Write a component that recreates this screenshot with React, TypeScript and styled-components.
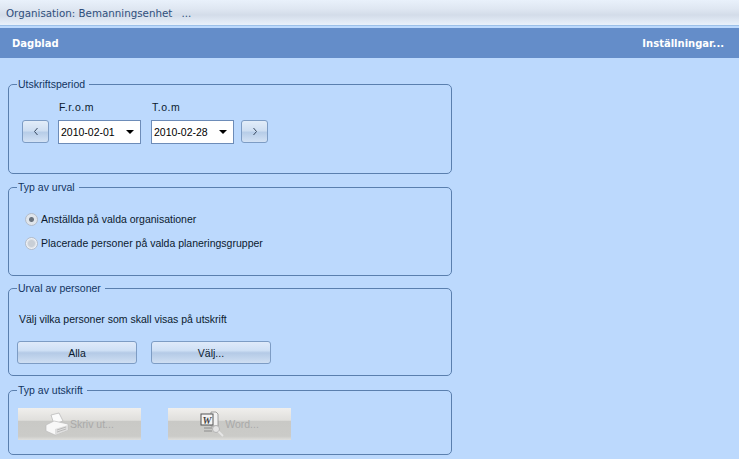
import React from "react";
import styled, { createGlobalStyle } from "styled-components";

const GlobalStyle = createGlobalStyle`
  html, body {
    margin: 0;
    padding: 0;
    height: 459px;
    overflow: hidden;
    background: #bcd9fd;
  }
  body {
    font-family: "Liberation Sans", Arial, sans-serif;
    font-size: 10.5px;
    color: #0b1a2e;
  }
`;

export default function App() {
  return (
    <Wrapper>
      <GlobalStyle />
      <TopBar>
        <span>Organisation: Bemanningsenhet</span>
        <span>...</span>
      </TopBar>
      <Header>
        <span>Dagblad</span>
        <span>Inställningar...</span>
      </Header>

      <Body>
        <Group $height={96} $gap={0}>
          <Legend>Utskriftsperiod</Legend>
          <PeriodRow>
            <NavButton aria-label="Föregående" $side="left">
              <Chevron viewBox="0 0 6 9">
                <path d="M4.5 1 L1.5 4.5 L4.5 8" />
              </Chevron>
            </NavButton>
            <DateField>
              <DateLabel>F.r.o.m</DateLabel>
              <DateBox>
                <span>2010-02-01</span>
                <Caret />
              </DateBox>
            </DateField>
            <DateField>
              <DateLabel>T.o.m</DateLabel>
              <DateBox>
                <span>2010-02-28</span>
                <Caret />
              </DateBox>
            </DateField>
            <NavButton aria-label="Nästa" $side="right">
              <Chevron viewBox="0 0 6 9">
                <path d="M1.5 1 L4.5 4.5 L1.5 8" />
              </Chevron>
            </NavButton>
          </PeriodRow>
        </Group>

        <Group $height={95} $gap={7}>
          <Legend>Typ av urval</Legend>
          <RadioList>
            <RadioRow>
              <Radio $checked />
              Anställda på valda organisationer
            </RadioRow>
            <RadioRow>
              <Radio />
              Placerade personer på valda planeringsgrupper
            </RadioRow>
          </RadioList>
        </Group>

        <Group $height={94} $gap={6}>
          <Legend>Urval av personer</Legend>
          <Hint>Välj vilka personer som skall visas på utskrift</Hint>
          <ButtonRow>
            <ActionButton>Alla</ActionButton>
            <ActionButton>Välj...</ActionButton>
          </ButtonRow>
        </Group>

        <Group $height={71} $gap={8}>
          <Legend>Typ av utskrift</Legend>
          <PrintRow>
            <DisabledButton disabled>
              <PrinterIcon />
              Skriv ut...
            </DisabledButton>
            <DisabledButton disabled>
              <WordIcon />
              Word...
            </DisabledButton>
          </PrintRow>
        </Group>
      </Body>
    </Wrapper>
  );
}

function PrinterIcon() {
  return (
    <svg width="24" height="24" viewBox="0 0 24 24">
      <path d="M6 3 L14 1 L18 9 L9 12 Z" fill="#fbfbfb" stroke="#b4b4b4" strokeWidth="0.7" />
      <path d="M1 13 L9 9 L23 12 L23 18 L10 23 L1 19 Z" fill="#f8f8f8" stroke="#bcbcbc" strokeWidth="0.7" />
      <path d="M10 17 L23 13 L23 18 L10 23 Z" fill="#dedede" />
      <path d="M12 18 L21 15 M12 20 L21 17" stroke="#b0b0b0" strokeWidth="0.8" />
    </svg>
  );
}

function WordIcon() {
  return (
    <svg width="24" height="26" viewBox="0 0 24 26">
      <path d="M11 1 H16 L18 3 V15 H11 Z" fill="#f2f2f2" stroke="#8a8a8a" strokeWidth="0.8" />
      <rect x="1" y="3" width="12" height="11" fill="#f4f4f4" stroke="#555" strokeWidth="1" />
      <text x="7" y="12.5" textAnchor="middle" fontSize="10" fontWeight="700" fontStyle="italic" fontFamily="Liberation Serif, serif" fill="#444">
        W
      </text>
      <path d="M4 17 H12 M4 20 H12" stroke="#8c8c8c" strokeWidth="1" />
      <circle cx="16" cy="18" r="3.5" fill="#e4e4e4" stroke="#b4b4b4" strokeWidth="1" />
      <path d="M18.5 20.5 L23 25" stroke="#e6e6e6" strokeWidth="1.8" />
    </svg>
  );
}

const Wrapper = styled.div`
  width: 739px;
  height: 459px;
  overflow: hidden;
  display: flex;
  flex-direction: column;
`;

const TopBar = styled.div`
  height: 26px;
  flex-shrink: 0;
  box-sizing: border-box;
  display: flex;
  align-items: center;
  gap: 9px;
  padding: 1px 0 0 6px;
  font-family: "DejaVu Sans", Verdana, sans-serif;
  font-size: 10.3px;
  color: #2f4f7c;
  background: linear-gradient(#e9f1fb 0%, #dfe7f2 35%, #d3dce9 60%, #e9f1fb 100%);
  border-bottom: 1px solid #9cc0e8;
`;

const Header = styled.div`
  height: 30px;
  margin-top: 2px;
  flex-shrink: 0;
  box-sizing: border-box;
  display: flex;
  align-items: center;
  justify-content: space-between;
  padding: 0 15px 0 12px;
  background: #648dc9;
  color: #fff;
  font-family: "DejaVu Sans", Verdana, sans-serif;
  font-size: 10px;
  font-weight: 700;
`;

const Body = styled.div`
  padding: 20px 0 0 8px;
  width: 444px;
`;

const Group = styled.fieldset<{ $height: number; $gap: number }>`
  margin: ${(p) => p.$gap}px 0 0;
  padding: 0;
  box-sizing: border-box;
  height: ${(p) => p.$height}px;
  border: 1px solid #5a7fae;
  border-radius: 5px;
`;

const Legend = styled.legend`
  margin-left: 8px;
  padding: 0 4px 0 1px;
  line-height: 13px;
  color: #12345f;
`;

const PeriodRow = styled.div`
  display: flex;
  align-items: flex-end;
  gap: 10px;
  padding: 10px 0 0 13px;
`;

const NavButton = styled.button<{ $side: "left" | "right" }>`
  width: 27px;
  height: 23px;
  padding: 0;
  margin-right: ${(p) => (p.$side === "left" ? -1 : 0)}px;
  margin-left: ${(p) => (p.$side === "right" ? -3 : 0)}px;
  margin-bottom: 1px;
  display: flex;
  align-items: center;
  justify-content: center;
  border: 1px solid #7d9cc4;
  border-radius: 3px;
  background: linear-gradient(#e2edf9 0%, #cfdff2 45%, #b7cde8 55%, #d3e2f5 100%);
`;

const Chevron = styled.svg`
  width: 6px;
  height: 9px;
  fill: none;
  stroke: #3a4a60;
  stroke-width: 1;
`;

const DateField = styled.div`
  display: flex;
  flex-direction: column;
  gap: 6px;
`;

const DateLabel = styled.div`
  padding-left: 1px;
  line-height: 13px;
  letter-spacing: 0.5px;
  color: #0b1a2e;
`;

const DateBox = styled.div`
  width: 83px;
  height: 24px;
  box-sizing: border-box;
  display: flex;
  align-items: center;
  justify-content: space-between;
  padding: 0 6px 0 2px;
  background: #fff;
  border: 1px solid #6d8cb8;
  color: #000;
`;

const Caret = styled.i`
  width: 0;
  height: 0;
  border-left: 4px solid transparent;
  border-right: 4px solid transparent;
  border-top: 4px solid #000;
`;

const RadioList = styled.div`
  display: flex;
  flex-direction: column;
  gap: 10px;
  padding: 18px 0 0 16px;
`;

const RadioRow = styled.label`
  display: flex;
  align-items: center;
  gap: 3px;
  height: 14px;
  color: #0b1a2e;
`;

const Radio = styled.span<{ $checked?: boolean }>`
  width: 11px;
  height: 11px;
  border-radius: 50%;
  border: 1px solid #b4bcc8;
  background: ${(p) =>
    p.$checked
      ? "radial-gradient(circle, #6a737e 0 2px, #dfe5ec 3px)"
      : "radial-gradient(circle, #c9cfd6 0 3px, #eef1f5 5px)"};
`;

const Hint = styled.div`
  padding: 17px 0 0 10px;
  line-height: 14px;
  color: #0b1a2e;
`;

const ButtonRow = styled.div`
  display: flex;
  gap: 14px;
  padding: 15px 0 0 8px;
`;

const ActionButton = styled.button`
  width: 120px;
  height: 23px;
  padding: 0;
  font: inherit;
  color: #0b1a2e;
  border: 1px solid #7d9cc4;
  border-radius: 3px;
  background: linear-gradient(#dfeafa 0%, #cfe0f5 40%, #b4cae6 52%, #cfdff3 100%);
`;

const PrintRow = styled.div`
  display: flex;
  gap: 27px;
  padding: 11px 0 0 9px;
`;

const DisabledButton = styled.button`
  width: 123px;
  height: 32px;
  padding: 0;
  display: flex;
  align-items: center;
  justify-content: center;
  gap: 1px;
  font: inherit;
  color: #a9a9a9;
  border: 0;
  background: linear-gradient(#f0efed 0%, #e0dfdc 38%, #c9c9c6 42%, #cbcbc8 88%, #dfdfdd 100%);
`;
